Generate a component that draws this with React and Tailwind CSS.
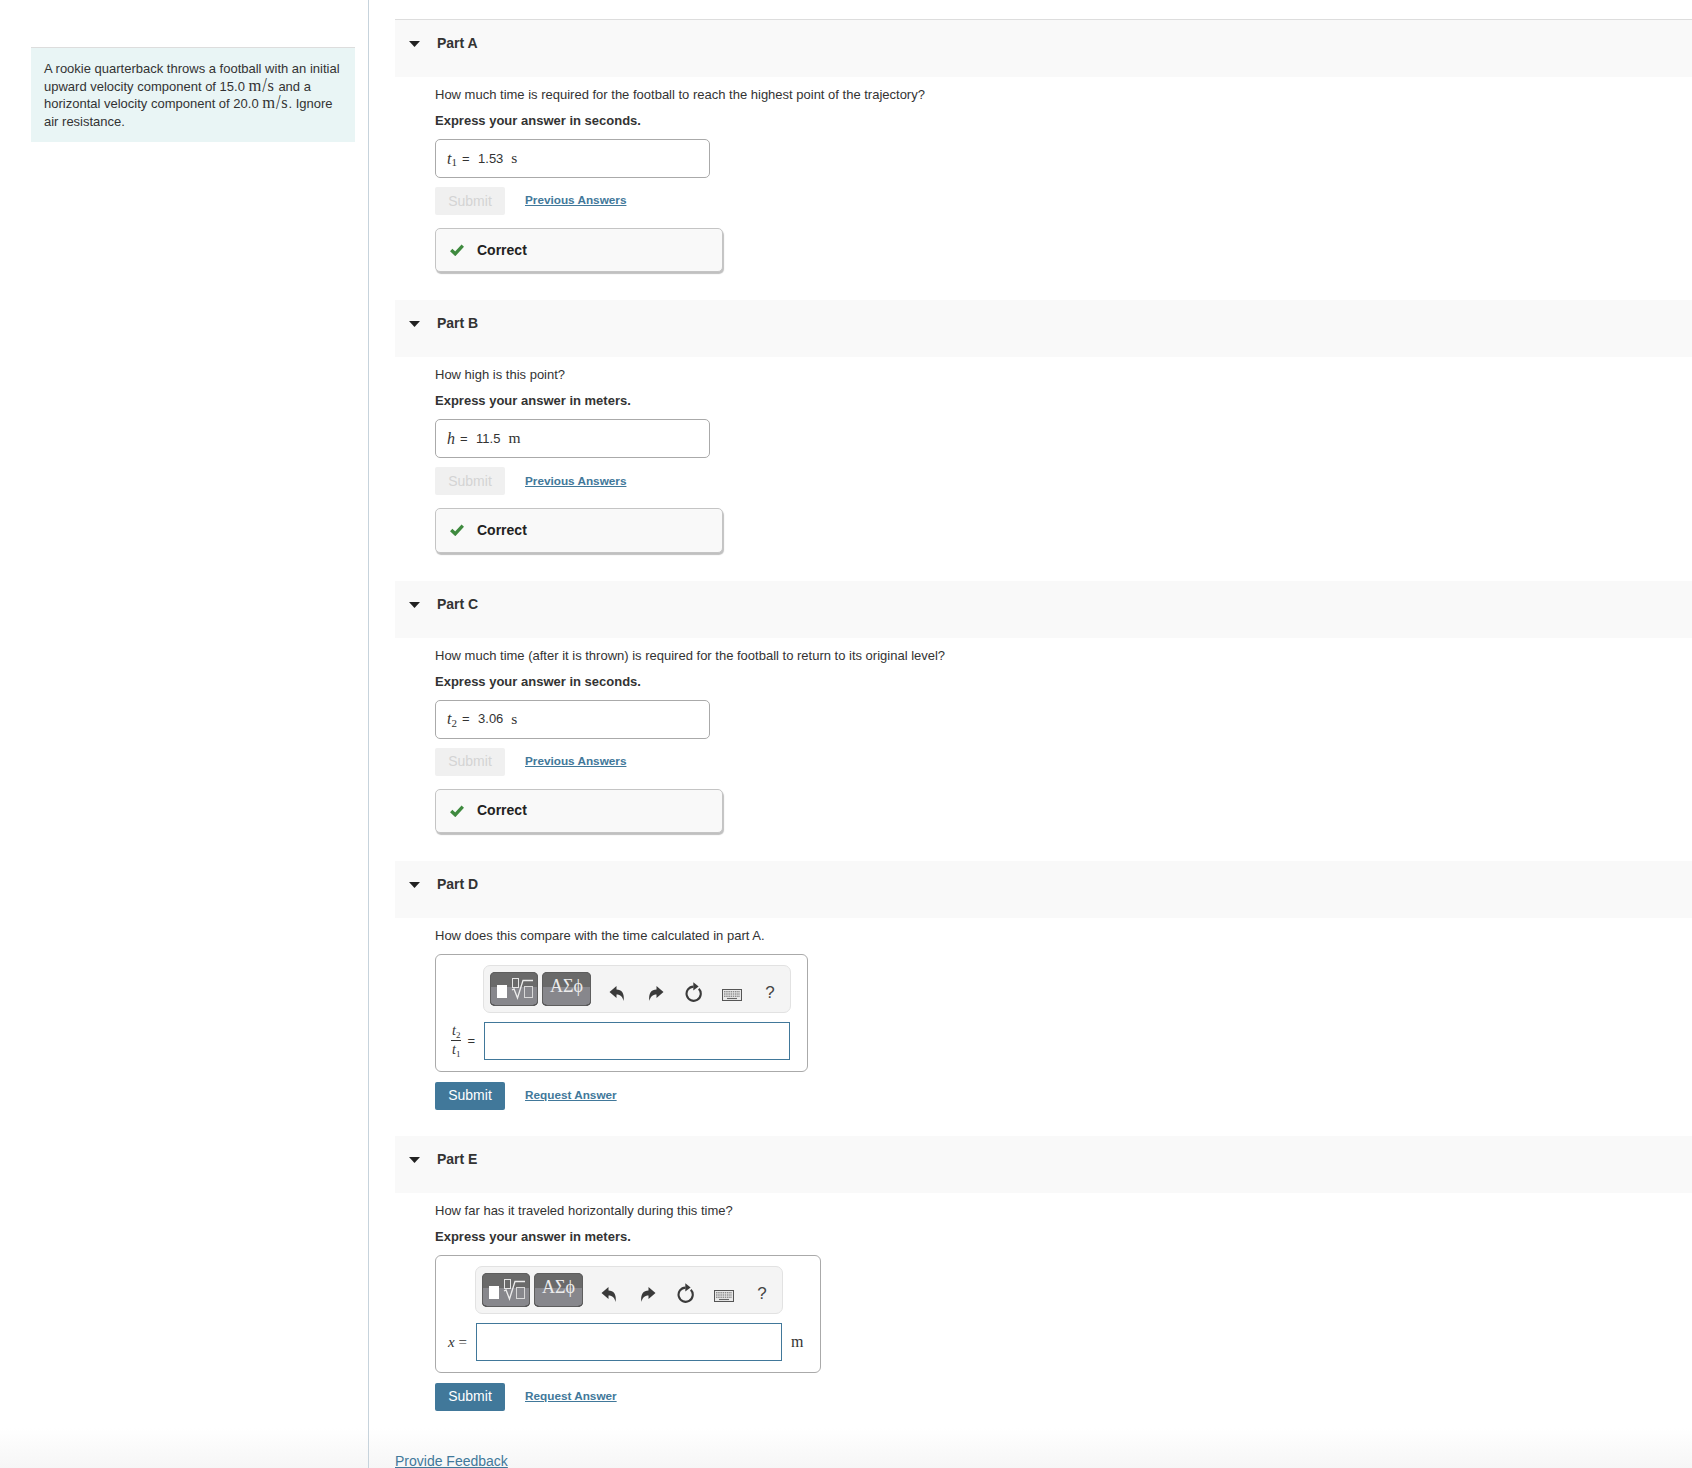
const SANS = 'font-["Liberation_Sans",Arial,sans-serif]'
const MATH = 'font-["Liberation_Serif",serif]'

function Caret() {
  return (
    <svg width="11" height="6" viewBox="0 0 11 6" className="shrink-0">
      <path d="M0 0 H11 L5.5 6 Z" fill="#222" />
    </svg>
  )
}

function CheckMark() {
  return (
    <svg width="14" height="12" viewBox="0 0 14 12" fill="none" className="shrink-0">
      <path d="M1.2 6.1 L5.2 9.8 L12.8 1.6" stroke="#3f8a3f" strokeWidth="3.4" />
    </svg>
  )
}

function ArrowIcon({ flip }) {
  return (
    <svg width="16" height="15" viewBox="0 0 16 15" className={flip ? '-scale-x-100' : ''}>
      <path d="M0.5 6 L7.5 0 V3.4 C12.5 3.4 15.8 7 14.6 15 C13.6 11 11.5 8.6 7.5 8.6 V12 Z" fill="#3a3a3a" />
    </svg>
  )
}

function RefreshIcon() {
  return (
    <svg width="18" height="20" viewBox="0 0 18 20" fill="none">
      <path d="M13.8 6.8 A7.1 7.1 0 1 1 8.5 4.6" stroke="#3a3a3a" strokeWidth="2.1" />
      <path d="M8.3 0.3 L13.6 4.5 L8.3 8.6 Z" fill="#3a3a3a" />
    </svg>
  )
}

function KeyboardIcon() {
  return (
    <svg width="20" height="12" viewBox="0 0 20 12">
      <rect x="0.5" y="0.5" width="19" height="11" fill="#e8e8e8" stroke="#555" />
      <path d="M2 2.8 H18 M2 5 H18 M2 7.2 H18" stroke="#666" strokeWidth="1" strokeDasharray="1.5 0.7" />
      <path d="M5 9.5 H15" stroke="#666" strokeWidth="1.1" />
    </svg>
  )
}

function TemplatesIcon() {
  return (
    <svg width="48" height="34" viewBox="0 0 48 34" fill="none" className="absolute left-0 top-0">
      <rect x="7" y="13" width="10" height="13" fill="#fff" />
      <rect x="22.5" y="6.5" width="6" height="9" stroke="#e6e6e6" />
      <path d="M22 18 L24 17 L27.5 26 L33 8.5 H43" stroke="#ececec" strokeWidth="1.3" />
      <rect x="34.5" y="14.5" width="8" height="11" stroke="#d8d8d8" />
    </svg>
  )
}

function GlossyButton({ className, children }) {
  return (
    <div className={`relative h-[34px] overflow-hidden rounded-[5px] shadow-[inset_0_0_0_1px_#5e5e5e,inset_0_-1px_0_0_#333] bg-[linear-gradient(#6a6a6a_0,#6a6a6a_44%,#87878c_44%,#87878c_100%)] ${className}`}>
      {children}
    </div>
  )
}

function Toolbar() {
  return (
    <div className="flex h-[48px] w-[308px] items-center rounded-[7px] border border-[#e2e2e2] bg-[#f4f4f4] pl-[6px]">
      <GlossyButton className="mr-[4px] w-[48px]">
        <TemplatesIcon />
      </GlossyButton>
      <GlossyButton className={`${MATH} flex w-[49px] items-start justify-center pt-[3.5px] text-[18px] leading-[22px] text-[#ececec]`}>
        ΑΣϕ
      </GlossyButton>
      <div className="ml-[17.5px] flex w-[16px] justify-center pt-[9px]"><ArrowIcon /></div>
      <div className="ml-[23.5px] flex w-[16px] justify-center pt-[9px]"><ArrowIcon flip /></div>
      <div className="ml-[20.5px] flex w-[18px] justify-center pt-[7px]"><RefreshIcon /></div>
      <div className="ml-[19px] flex w-[20px] justify-center pt-[12px]"><KeyboardIcon /></div>
      <div className="ml-[20.5px] w-[16px] pt-[8px] text-center text-[17px] leading-[20px] text-[#444]">?</div>
    </div>
  )
}

function MathAnswer({ width, toolbarPad, labelWidth, label, unit }) {
  return (
    <div className={`rounded-[6px] border border-[#aaaaaa] pt-[10px] pb-[11px] ${width}`}>
      <div className={toolbarPad}>
        <Toolbar />
      </div>
      <div className="mt-[9px] flex items-center">
        <div className={`flex items-center justify-end pr-[9px] text-[#333] ${labelWidth}`}>{label}</div>
        <div className="h-[38px] w-[306px] border border-[#41789a]" />
        {unit && <span className={`${MATH} ml-[9px] text-[16px] text-[#333]`}>{unit}</span>}
      </div>
    </div>
  )
}

function PartHeader({ title }) {
  return (
    <div className="flex h-[57px] items-start bg-[#f9f9f9] pl-[14px] pt-[13px]">
      <div className="pt-[8px]"><Caret /></div>
      <h3 className="ml-[17px] text-[14px] font-bold leading-[20px] text-[#333]">{title}</h3>
    </div>
  )
}

function AnsweredPart({ title, question, express, label, value, unit }) {
  return (
    <section className="pb-[3px]">
      <PartHeader title={title} />
      <div className="pl-[40px]">
        <p className="mt-[8px] text-[13px] leading-[19px] text-[#333]">{question}</p>
        <p className="mt-[7px] text-[13px] font-bold leading-[19px] text-[#333]">{express}</p>
        <div className="mt-[9px] flex h-[39px] w-[275px] items-center rounded-[5px] border border-[#aaaaaa] pl-[11px] text-[13px] text-[#333]">
          <span className={`${MATH} text-[16px]`}>{label}</span>
          <span className="ml-[5px]">=</span>
          <span className="ml-[8.5px]">{value}</span>
          <span className={`${MATH} -mt-[2px] ml-[8px] text-[15.5px]`}>{unit}</span>
        </div>
        <div className="mt-[9px] flex items-center">
          <button type="button" className="h-[28px] w-[70px] rounded-[2px] bg-[#f0f0f0] text-[14px] text-[#d4d4d4]">Submit</button>
          <a className="-mt-[2px] ml-[20px] text-[11.75px] font-bold text-[#41789a] underline">Previous Answers</a>
        </div>
        <div className="mt-[13px] flex h-[44.33px] w-[288px] items-center rounded-[5px] border border-[#c4c4c4] bg-[#f9f9f9] pl-[14px] shadow-[1px_2px_1px_#c0c0c0]">
          <CheckMark />
          <span className="ml-[13px] text-[14px] font-bold text-[#222]">Correct</span>
        </div>
      </div>
    </section>
  )
}

function OpenPart({ title, question, express, answer }) {
  return (
    <section className="pb-[1px]">
      <PartHeader title={title} />
      <div className="pl-[40px]">
        <p className="mt-[8px] text-[13px] leading-[19px] text-[#333]">{question}</p>
        {express && <p className="mt-[7px] text-[13px] font-bold leading-[19px] text-[#333]">{express}</p>}
        <div className="mt-[9px]">{answer}</div>
        <div className="mt-[10px] flex items-center">
          <button type="button" className="h-[28px] w-[70px] rounded-[2px] bg-[#41789a] text-[14px] text-white">Submit</button>
          <a className="-mt-[2px] ml-[20px] text-[11.75px] font-bold text-[#41789a] underline">Request Answer</a>
        </div>
      </div>
    </section>
  )
}

const Fraction = () => (
  <span className={`${MATH} flex items-center text-[14px] leading-none`}>
    <span className="flex flex-col items-center">
      <span className="border-b border-[#333] px-[1px] pb-[2px] italic">t<sub className="not-italic text-[9px]">2</sub></span>
      <span className="pt-[2px] italic">t<sub className="not-italic text-[9px]">1</sub></span>
    </span>
    <span className={`${SANS} ml-[6px] text-[13px]`}>=</span>
  </span>
)

const Sub = ({ n }) => <><i>t</i><sub className="text-[11px]">{n}</sub></>

const SpeedUnit = () => (
  <span className={`${MATH} inline-block text-[16.5px] leading-[13px] tracking-[0.8px]`}>
    m<span className="inline-block scale-y-125">/</span>s
  </span>
)

export default function App() {
  return (
    <div className={`${SANS} relative flex h-[1468px] w-full overflow-hidden bg-white`}>
      <div className="pointer-events-none absolute inset-x-0 bottom-0 h-[40px] bg-gradient-to-b from-white to-[#f6f6f6]" />
      <aside className="relative w-[369px] shrink-0 border-r border-[#c7d3dc] pl-[31px] pr-[13px] pt-[47px]">
        <div className="h-[95px] border-t border-[#dddddd] bg-[#e9f5f5] px-[13px] pt-[12px] text-[13px] leading-[17.6px] text-[#333]">
          A rookie quarterback throws a football with an initial upward velocity component of 15.0 <SpeedUnit /> and a horizontal velocity component of 20.0 <SpeedUnit />. Ignore air resistance.
        </div>
      </aside>
      <main className="relative min-w-0 flex-1 pl-[26px] pt-[19px]">
        <div className="flex flex-col gap-[25px] border-t border-[#dddddd]">
          <AnsweredPart title="Part A" question="How much time is required for the football to reach the highest point of the trajectory?" express="Express your answer in seconds." label={<Sub n="1" />} value="1.53" unit="s" />
          <AnsweredPart title="Part B" question="How high is this point?" express="Express your answer in meters." label={<i>h</i>} value="11.5" unit="m" />
          <AnsweredPart title="Part C" question="How much time (after it is thrown) is required for the football to return to its original level?" express="Express your answer in seconds." label={<Sub n="2" />} value="3.06" unit="s" />
          <OpenPart title="Part D" question="How does this compare with the time calculated in part A." answer={<MathAnswer width="w-[373px]" toolbarPad="pl-[47px]" labelWidth="w-[48px]" label={<Fraction />} />} />
          <OpenPart title="Part E" question="How far has it traveled horizontally during this time?" express="Express your answer in meters." answer={<MathAnswer width="w-[386px]" toolbarPad="pl-[39px]" labelWidth="w-[40px]" label={<span className={`${MATH} text-[15px]`}><i>x</i> =</span>} unit="m" />} />
        </div>
        <a className="mt-[39px] block text-[14px] leading-[20px] text-[#41789a] underline">Provide Feedback</a>
      </main>
    </div>
  )
}
